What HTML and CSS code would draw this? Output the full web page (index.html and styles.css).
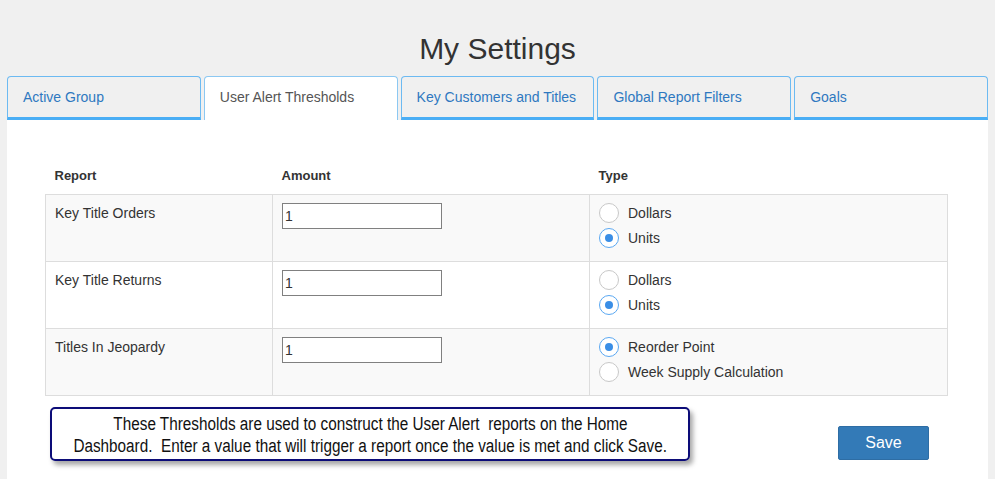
FILE: index.html
```html
<!DOCTYPE html>
<html lang="en">
<head>
    <meta charset="UTF-8">
    <meta name="viewport" content="width=device-width, initial-scale=1.0">
    <title>My Settings</title>
    <link rel="stylesheet" href="styles.css">
</head>
<body>
    <div class="page">
        <h1 class="title">My Settings</h1>
        <div class="tabs">
            <div class="tab">Active Group</div>
            <div class="tab active">User Alert Thresholds</div>
            <div class="tab">Key Customers and Titles</div>
            <div class="tab">Global Report Filters</div>
            <div class="tab">Goals</div>
        </div>
        <div class="panel">
            <table class="thresholds">
                <thead>
                    <tr>
                        <th class="col-report">Report</th>
                        <th class="col-amount">Amount</th>
                        <th>Type</th>
                    </tr>
                </thead>
                <tbody>
                    <tr class="odd">
                        <td>Key Title Orders</td>
                        <td><input type="text" class="amount" value="1"></td>
                        <td>
                            <label class="radio"><span class="dot"></span>Dollars</label>
                            <label class="radio"><span class="dot checked"></span>Units</label>
                        </td>
                    </tr>
                    <tr>
                        <td>Key Title Returns</td>
                        <td><input type="text" class="amount" value="1"></td>
                        <td>
                            <label class="radio"><span class="dot"></span>Dollars</label>
                            <label class="radio"><span class="dot checked"></span>Units</label>
                        </td>
                    </tr>
                    <tr class="odd">
                        <td>Titles In Jeopardy</td>
                        <td><input type="text" class="amount" value="1"></td>
                        <td>
                            <label class="radio"><span class="dot checked"></span>Reorder Point</label>
                            <label class="radio"><span class="dot"></span>Week Supply Calculation</label>
                        </td>
                    </tr>
                </tbody>
            </table>
            <div class="footer">
                <div class="note">
                    <span class="note-line">These Thresholds are used to construct the User Alert&nbsp; reports on the Home</span>
                    <span class="note-line">Dashboard.&nbsp; Enter a value that will trigger a report once the value is met and click Save.</span>
                </div>
                <button type="button" class="save">Save</button>
            </div>
        </div>
    </div>
</body>
</html>
```

FILE: styles.css
```css
body {
    margin: 0;
    background-color: #f0f0f0;
    font-family: "Liberation Sans", Arial, sans-serif;
    color: #333;
}
.page {
    margin: 0 7px;
    height: 479px;
    display: flex;
    flex-direction: column;
}
.title {
    margin: 0;
    padding-top: 32px;
    height: 44px;
    font-size: 30px;
    font-weight: normal;
    line-height: 34px;
    text-align: center;
    color: #333;
}
.tabs {
    display: flex;
    gap: 3px;
}
.tab {
    flex: 1;
    height: 40px;
    line-height: 40px;
    padding-left: 15px;
    font-size: 14px;
    color: #2e78c0;
    background-color: #f0f0f0;
    border: 1px solid #6cbaf2;
    border-bottom: 3px solid #4aaef5;
    border-radius: 4px 4px 0 0;
}
.tab.active {
    background-color: #fff;
    color: #555;
    height: 43px;
    border-bottom: none;
    border-color: #8cc8f2;
}
.panel {
    flex: 1;
    background-color: #fff;
    padding: 43px 40px 0 38px;
}
.thresholds {
    width: 100%;
    border-collapse: collapse;
    font-size: 14px;
}
.thresholds th {
    text-align: left;
    font-size: 13px;
    font-weight: bold;
    padding: 0 9px 6px;
    height: 25px;
    color: #333;
}
.col-report {
    width: 209px;
}
.col-amount {
    width: 299px;
}
.thresholds td {
    border: 1px solid #ddd;
    vertical-align: top;
    padding: 8px 9px 0;
    height: 58px;
    line-height: 20px;
}
.thresholds tr.odd td {
    background-color: #f9f9f9;
}
.amount {
    box-sizing: border-box;
    width: 160px;
    height: 26px;
    margin: 0;
    padding: 0 2px;
    border: 1px solid #808080;
    font-family: "Liberation Sans", Arial, sans-serif;
    font-size: 14px;
    color: #333;
}
.radio {
    display: flex;
    align-items: center;
    gap: 9px;
    height: 25px;
}
.radio:first-child {
    margin-top: -3px;
}
.dot {
    box-sizing: border-box;
    width: 20px;
    height: 20px;
    border: 1px solid #c8c8c8;
    border-radius: 50%;
    background-color: #fff;
    display: flex;
    align-items: center;
    justify-content: center;
}
.dot.checked {
    border-color: #5aa8f2;
}
.dot.checked::after {
    content: "";
    width: 8px;
    height: 8px;
    border-radius: 50%;
    background-color: #3a8ee6;
}
.footer {
    display: flex;
    justify-content: space-between;
    align-items: flex-start;
    margin-top: 11px;
}
.note {
    box-sizing: border-box;
    width: 640px;
    height: 54px;
    margin-left: 5px;
    padding-top: 4px;
    border: 2px solid #0c0c78;
    border-radius: 5px;
    box-shadow: 3px 4px 5px rgba(0, 0, 0, 0.35);
    display: flex;
    flex-direction: column;
    align-items: center;
    font-size: 18px;
    line-height: 22px;
    color: #111;
}
.note-line {
    white-space: nowrap;
    transform: scaleX(0.85);
}
.save {
    width: 91px;
    height: 34px;
    margin-top: 19px;
    margin-right: 19px;
    background-color: #337ab7;
    border: 1px solid #2e6da4;
    border-radius: 2px;
    color: #fff;
    font-family: "Liberation Sans", Arial, sans-serif;
    font-size: 16px;
}
```
